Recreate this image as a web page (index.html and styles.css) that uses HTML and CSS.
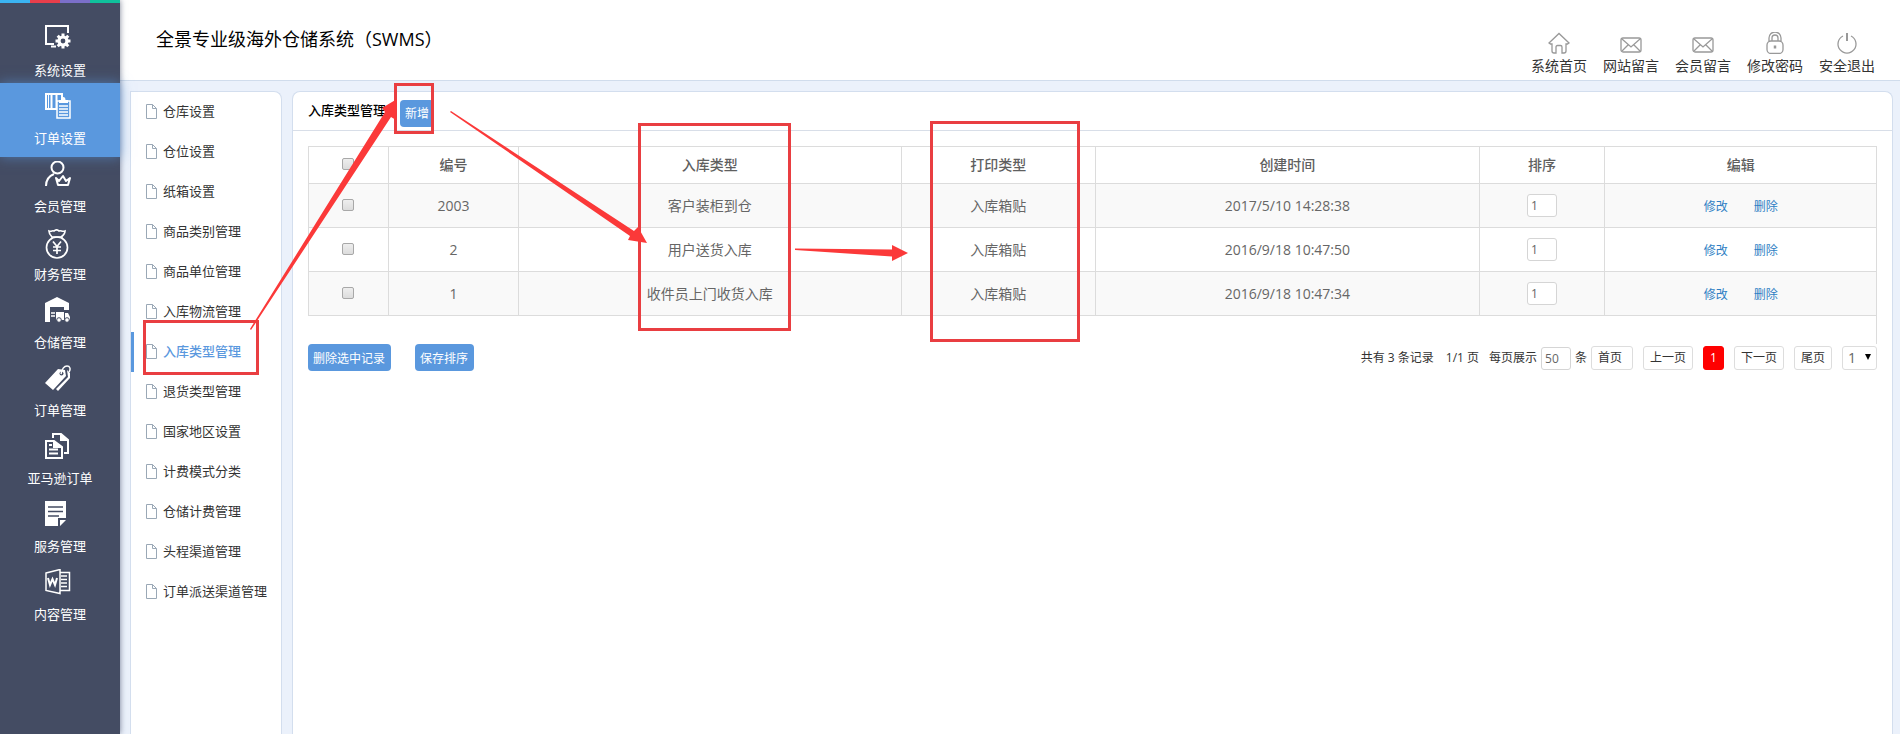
FILE: index.html
```html
<!DOCTYPE html>
<html lang="zh-CN">
<head>
<meta charset="utf-8">
<title>全景专业级海外仓储系统（SWMS）</title>
<link rel="stylesheet" href="styles.css">
</head>
<body>
<svg class="sprite" aria-hidden="true">
  <symbol id="file" viewBox="0 0 11 15"><path d="M.5.5h6l4 4v10H.5zM6.500.5v4h4" fill="#fff" stroke="#9aa8b6"/></symbol>
  <symbol id="mail" viewBox="0 0 22 22"><rect x="1" y="6" width="20" height="14" rx="2"/><path d="M2 7l9 8 9-8M2 19l6-6M20 19l-6-6"/></symbol>
</svg>
<div class="app">
  <aside class="rail">
    <div class="strip"><i class="s1"></i><i class="s2"></i><i class="s3"></i><i class="s4"></i></div>
    <nav class="rail-nav">
      <a href="#"><svg viewBox="0 0 26 26"><path d="M9 19H1V1h22v7M6 21.500h5" fill="none" stroke="#fff" stroke-width="2"/><circle cx="18" cy="16" r="4" fill="none" stroke="#fff" stroke-width="3.200"/><path d="M18 8.500v3M18 20.500v3M10.500 16h3M22.500 16h3M12.700 10.700l2 2M21.300 19.300l2 2M12.700 21.300l2-2M21.300 12.700l2-2" stroke="#fff" stroke-width="3"/></svg>系统设置</a>
      <a href="#" class="on"><svg viewBox="0 0 26 26"><path d="M1 1h16v15H1zM6.500 1v15M11.500 1v15" fill="none" stroke="#fff" stroke-width="2"/><path d="M3.500 2v13" stroke="#fff" stroke-width="1"/><path d="M12 8h13v17H12z" fill="#5a98de" stroke="#fff" stroke-width="1.500"/><path d="M14 10V7h2.500c0-4 4-4 4 0H23v3z" fill="#fff"/><path d="M14 13h9M14 16h9M14 19h9M14 22h9" stroke="#fff" stroke-width="1.300"/></svg>订单设置</a>
      <a href="#"><svg viewBox="0 0 26 26" fill="none" stroke="#fff" stroke-width="2"><circle cx="12.500" cy="6.500" r="6"/><path d="M1 25c0-6 3-10 8-12M11 17l3 3 4-5 3 5 4-3-2 7H13z" stroke-linejoin="round"/></svg>会员管理</a>
      <a href="#"><svg class="tall" viewBox="0 0 26 30" fill="none" stroke="#fff" stroke-width="1.700"><path d="M7 8C4 5 4 3 4 2c3 1 3-1 5 0 2-2 4-1 5 0 2-1 3 1 6 0 0 2-1 4-4 6M6 8h12"/><circle cx="12" cy="18.500" r="10.500"/><path d="M8 12.500l4 5 4-5M12 17v8M8 18h8M8 21.500h8"/></svg>财务管理</a>
      <a href="#"><svg viewBox="0 0 26 26"><path d="M0 6L12 0l12 6v7H19V10H5v15H0z" fill="#fff"/><path d="M11 15h8v8h-8zM20 16h3l2 4v3h-5z" fill="#fff"/><path d="M6 16h4M6 19h4" stroke="#fff" stroke-width="1.500"/><g fill="#fff" stroke="#444c63"><circle cx="14" cy="23" r="2.300"/><circle cx="22" cy="23" r="2.300"/></g></svg>仓储管理</a>
      <a href="#"><svg viewBox="0 0 26 26"><path d="M0 18L13 4l7 1 1 6L8 25zM22 5l3 3v5L13 26l-2-2 12-12z" fill="#fff"/><circle cx="16.500" cy="8.500" r="2" fill="#444c63"/><path d="M16 9c1-5 3-8 6-8 3 0 4 3 2 6" fill="none" stroke="#fff" stroke-width="1.500"/></svg>订单管理</a>
      <a href="#"><svg viewBox="0 0 26 26" fill="none" stroke="#fff" stroke-width="2"><path d="M1 8h8l8 6v11H1z"/><path d="M8 5V1h8l7 6v13h-4"/><path d="M15 0v8h8zM8 7v8h9z" fill="#fff" stroke="none"/><path d="M4 12h3M4 16.500h9M4 20.500h9"/></svg>亚马逊订单</a>
      <a href="#"><svg viewBox="0 0 26 26"><path d="M0 0h21v17h-8v8H0zM15 19h6l-6 6z" fill="#fff"/><path d="M3 6h15M3 10.500h15M3 15h11" stroke="#444c63" stroke-width="1.500"/></svg>服务管理</a>
      <a href="#"><svg viewBox="0 0 26 26" fill="none" stroke="#fff"><path d="M1 4l14-3.500v24L1 21.500zM15 3.500h9.500v18H15M16 7h6M16 10.500h6M16 14h6M16 17.500h6" stroke-width="1.500"/><path d="M3 9l2 7 2.500-6L10 16l2-7" stroke-width="2"/></svg>内容管理</a>
    </nav>
  </aside>
  <div class="page">
    <header class="top">
      <h1>全景专业级海外仓储系统（SWMS）</h1>
      <nav class="tools">
        <a href="#"><svg viewBox="0 0 22 22"><path d="M1 11L11 1.500 21 11l-1.500 1H18v7q0 2-2 2h-2v-6q0-1.500-1.500-1.500h-3Q8 13.500 8 15v6H6q-2 0-2-2v-7H2.500z"/></svg>系统首页</a>
        <a href="#"><svg><use href="#mail"/></svg>网站留言</a>
        <a href="#"><svg><use href="#mail"/></svg>会员留言</a>
        <a href="#"><svg viewBox="0 0 22 22"><path d="M5 9V6a6 6 0 0 1 12 0v3M8 9V6a3 3 0 0 1 6 0v3"/><rect x="3" y="9" width="16" height="12.500" rx="4"/><path d="M11 13.500v3" stroke-width="2.500"/></svg>修改密码</a>
        <a href="#"><svg viewBox="0 0 22 22"><path d="M7 4a9 9 0 1 0 8 0" /><path d="M11 1v8" stroke-width="2"/></svg>安全退出</a>
      </nav>
    </header>
    <div class="body">
      <nav class="side">
        <a href="#"><svg><use href="#file"/></svg>仓库设置</a>
        <a href="#"><svg><use href="#file"/></svg>仓位设置</a>
        <a href="#"><svg><use href="#file"/></svg>纸箱设置</a>
        <a href="#"><svg><use href="#file"/></svg>商品类别管理</a>
        <a href="#"><svg><use href="#file"/></svg>商品单位管理</a>
        <a href="#"><svg><use href="#file"/></svg>入库物流管理</a>
        <a href="#" class="on"><svg><use href="#file"/></svg>入库类型管理</a>
        <a href="#"><svg><use href="#file"/></svg>退货类型管理</a>
        <a href="#"><svg><use href="#file"/></svg>国家地区设置</a>
        <a href="#"><svg><use href="#file"/></svg>计费模式分类</a>
        <a href="#"><svg><use href="#file"/></svg>仓储计费管理</a>
        <a href="#"><svg><use href="#file"/></svg>头程渠道管理</a>
        <a href="#"><svg><use href="#file"/></svg>订单派送渠道管理</a>
      </nav>
      <main class="main">
        <div class="main-head"><h2>入库类型管理</h2><button type="button" class="btn add">新增</button></div>
        <div class="content">
          <div class="table-wrap">
          <table>
            <colgroup><col class="c1"><col class="c2"><col class="c3"><col class="c4"><col class="c5"><col class="c6"><col class="c7"></colgroup>
            <thead><tr><th><input type="checkbox" aria-label="全选"></th><th>编号</th><th>入库类型</th><th>打印类型</th><th>创建时间</th><th>排序</th><th>编辑</th></tr></thead>
            <tbody>
              <tr><td><input type="checkbox" aria-label="选择 2003"></td><td>2003</td><td>客户装柜到仓</td><td>入库箱贴</td><td>2017/5/10 14:28:38</td><td><input type="text" class="num" value="1" aria-label="排序"></td><td><div class="acts"><a href="#">修改</a><a href="#">删除</a></div></td></tr>
              <tr><td><input type="checkbox" aria-label="选择 2"></td><td>2</td><td>用户送货入库</td><td>入库箱贴</td><td>2016/9/18 10:47:50</td><td><input type="text" class="num" value="1" aria-label="排序"></td><td><div class="acts"><a href="#">修改</a><a href="#">删除</a></div></td></tr>
              <tr><td><input type="checkbox" aria-label="选择 1"></td><td>1</td><td>收件员上门收货入库</td><td>入库箱贴</td><td>2016/9/18 10:47:34</td><td><input type="text" class="num" value="1" aria-label="排序"></td><td><div class="acts"><a href="#">修改</a><a href="#">删除</a></div></td></tr>
            </tbody>
          </table>
          </div>
          <div class="foot">
            <div class="bulk"><button type="button" class="btn">删除选中记录</button><button type="button" class="btn">保存排序</button></div>
            <div class="pager">
              <div class="stats"><span>共有 3 条记录</span><span>1/1 页</span></div>
              <label class="size">每页展示<input type="text" class="num" value="50">条</label><a href="#" class="pg first">首页</a>
              <a href="#" class="pg">上一页</a><a href="#" class="pg cur">1</a><a href="#" class="pg">下一页</a><a href="#" class="pg">尾页</a>
              <span class="sel"><select aria-label="页码"><option>1</option></select></span>
            </div>
          </div>
        </div>
      </main>
    </div>
  </div>
  <svg class="marks" aria-hidden="true">
    <g class="boxes"><rect x="144.500" y="321.500" width="113" height="52"/><rect x="395.500" y="84.500" width="37" height="48"/><rect x="639.500" y="124.500" width="150" height="205"/><rect x="931.500" y="122.500" width="147" height="218"/></g>
    <g class="arrows"><path d="M250 329L385 112 382 108 397 99 396 120 391 117 251 330z"/><path d="M451 111L634 231 638 227 647 243 628 240 630 236 450 112z"/><path d="M795 248.500L892 249.500V245L908 253 892 261V256.500L795 250z"/></g>
  </svg>
</div>
</body>
</html>
```
FILE: styles.css
```css
* { box-sizing: border-box; }
body { margin: 0; font: 13px/20px "Open Sans", "Noto Sans CJK SC", sans-serif; color: #333; background: #ebf1fb; }
a { color: inherit; text-decoration: none; }
h1, h2 { margin: 0; }
button, input, select { font: inherit; color: inherit; }
.sprite { display: none; }
.app { position: relative; display: flex; min-height: 100vh; overflow: hidden; }

.rail { flex: none; width: 120px; background: #444c63; box-shadow: 0 0 6px rgba(40, 50, 80, .6); z-index: 1; }
.strip { display: flex; height: 3px; }
.strip i { flex: 1; }
.s1 { background: #3bb4f2; }
.s2 { background: #e83e4b; }
.s3 { background: #7b6fc9; }
.s4 { background: #10c19c; }
.rail-nav { display: flex; flex-direction: column; padding-top: 12px; }
.rail-nav a { display: flex; flex-direction: column; height: 68px; padding-top: 10px; color: #fff; text-align: center; }
.rail-nav svg { flex: none; width: 26px; height: 26px; margin: 0 0 9px 45px; }
.rail-nav .tall { height: 30px; margin-bottom: 5px; }
.rail-nav .on { height: 74px; margin-bottom: -6px; background: #5a98de; box-shadow: 0 0 12px rgba(90, 152, 222, .6); }

.page { flex: 1; min-width: 0; display: flex; flex-direction: column; }
.top { display: flex; justify-content: space-between; height: 81px; padding: 0 25px 0 36px; background: #fff; border-bottom: 1px solid #d0dcec; }
.top h1 { padding-top: 26px; font-size: 18px; line-height: 26px; font-weight: 400; color: #000; text-spacing-trim: space-all; }
.tools { display: flex; gap: 16px; padding-top: 32px; }
.tools a { display: flex; flex-direction: column; align-items: center; font-size: 14px; }
.tools svg { width: 22px; height: 22px; margin-bottom: 2px; fill: none; stroke: #999; stroke-width: 1.3px; }

.body { flex: 1; display: flex; gap: 10px; padding: 10px 7px 0 10px; }
.side { flex: none; width: 152px; background: #fff; border: 1px solid #d3deee; border-bottom: 0; border-radius: 0 8px 0 0; }
.side a { display: flex; align-items: center; gap: 6px; height: 40px; padding: 0 0 2px 15px; }
.side svg { width: 11px; height: 15px; }
.side .on { padding-left: 12px; border-left: 3px solid #5a98de; color: #5a98de; font-weight: 500; }

.main { flex: 1; min-width: 0; background: #fff; border: 1px solid #d3deee; border-bottom: 0; border-radius: 8px 8px 0 0; }
.main-head { display: flex; align-items: center; gap: 14px; height: 39px; padding-left: 15px; border-bottom: 1px solid #d8dee8; }
.main-head h2 { padding-bottom: 2px; font-size: 13px; font-weight: 500; color: #000; }
.btn { height: 27px; padding: 2px 6px 0 5px; border: 0; border-radius: 4px; background: #5a98de; color: #fff; font-size: 12px; white-space: nowrap; }
.add { margin-top: 4px; padding-right: 5px; }
.content { padding: 15px 15px 0; }
.table-wrap { padding-bottom: 28px; border-right: 1px solid #dcdcdc; }
table { width: 100%; border-collapse: collapse; table-layout: fixed; font-size: 14px; color: #666; }
.c1 { width: 5.1%; }
.c2 { width: 8.3%; }
.c3 { width: 24.4%; }
.c4 { width: 12.4%; }
.c5 { width: 24.5%; }
.c6 { width: 8%; }
.c7 { width: 17.3%; }
th, td { padding: 0; border: 1px solid #dcdcdc; text-align: center; }
tr > :last-child { border-right: 0; }
th { height: 37px; font-weight: 500; color: #5f5f5f; }
td { height: 44px; }
tbody tr:nth-child(odd) { background: #f9f9f9; }
input[type=checkbox] { appearance: none; display: block; width: 12px; height: 12px; margin: 0 auto 2px; border: 1px solid #a8a8a8; border-radius: 2px; background: linear-gradient(#eee, #dcdcdc); }
.num { display: block; width: 30px; height: 23px; margin: 0 auto; padding: 0 3px; border: 1px solid #d5d5d5; border-radius: 3px; background: #fff; color: #666; font-size: 12px; }
.acts { display: flex; justify-content: center; gap: 26px; padding-top: 2px; font-size: 12px; color: #2f7fc4; }

.foot { display: flex; justify-content: space-between; align-items: flex-start; }
.bulk { display: flex; gap: 24px; }
.pager { display: flex; align-items: center; gap: 10px; padding-top: 2px; font-size: 12px; }
.stats { display: flex; gap: 12px; }
.size { display: flex; align-items: center; gap: 4px; }
.pg { height: 24px; padding: 0 6px; border: 1px solid #ddd; border-radius: 3px; line-height: 22px; }
.first { margin-left: -6px; padding-right: 10px; }
.cur { border-color: #f00; background: #f00; color: #fff; }
.sel { position: relative; display: block; }
.sel::after { content: ""; position: absolute; right: 6px; top: 8px; border: 3px solid transparent; border-top: 6px solid #000; border-bottom: 0; pointer-events: none; }
.sel select { display: block; appearance: none; width: 35px; height: 24px; padding: 0 5px; border: 1px solid #ddd; border-radius: 3px; background: #fff; color: #666; font-size: 14px; }

.marks { position: absolute; left: 0; top: 0; width: 100%; height: 100%; z-index: 2; pointer-events: none; }
.boxes { fill: none; stroke: #e93e41; stroke-width: 3px; }
.arrows { fill: #fb3939; }
```
